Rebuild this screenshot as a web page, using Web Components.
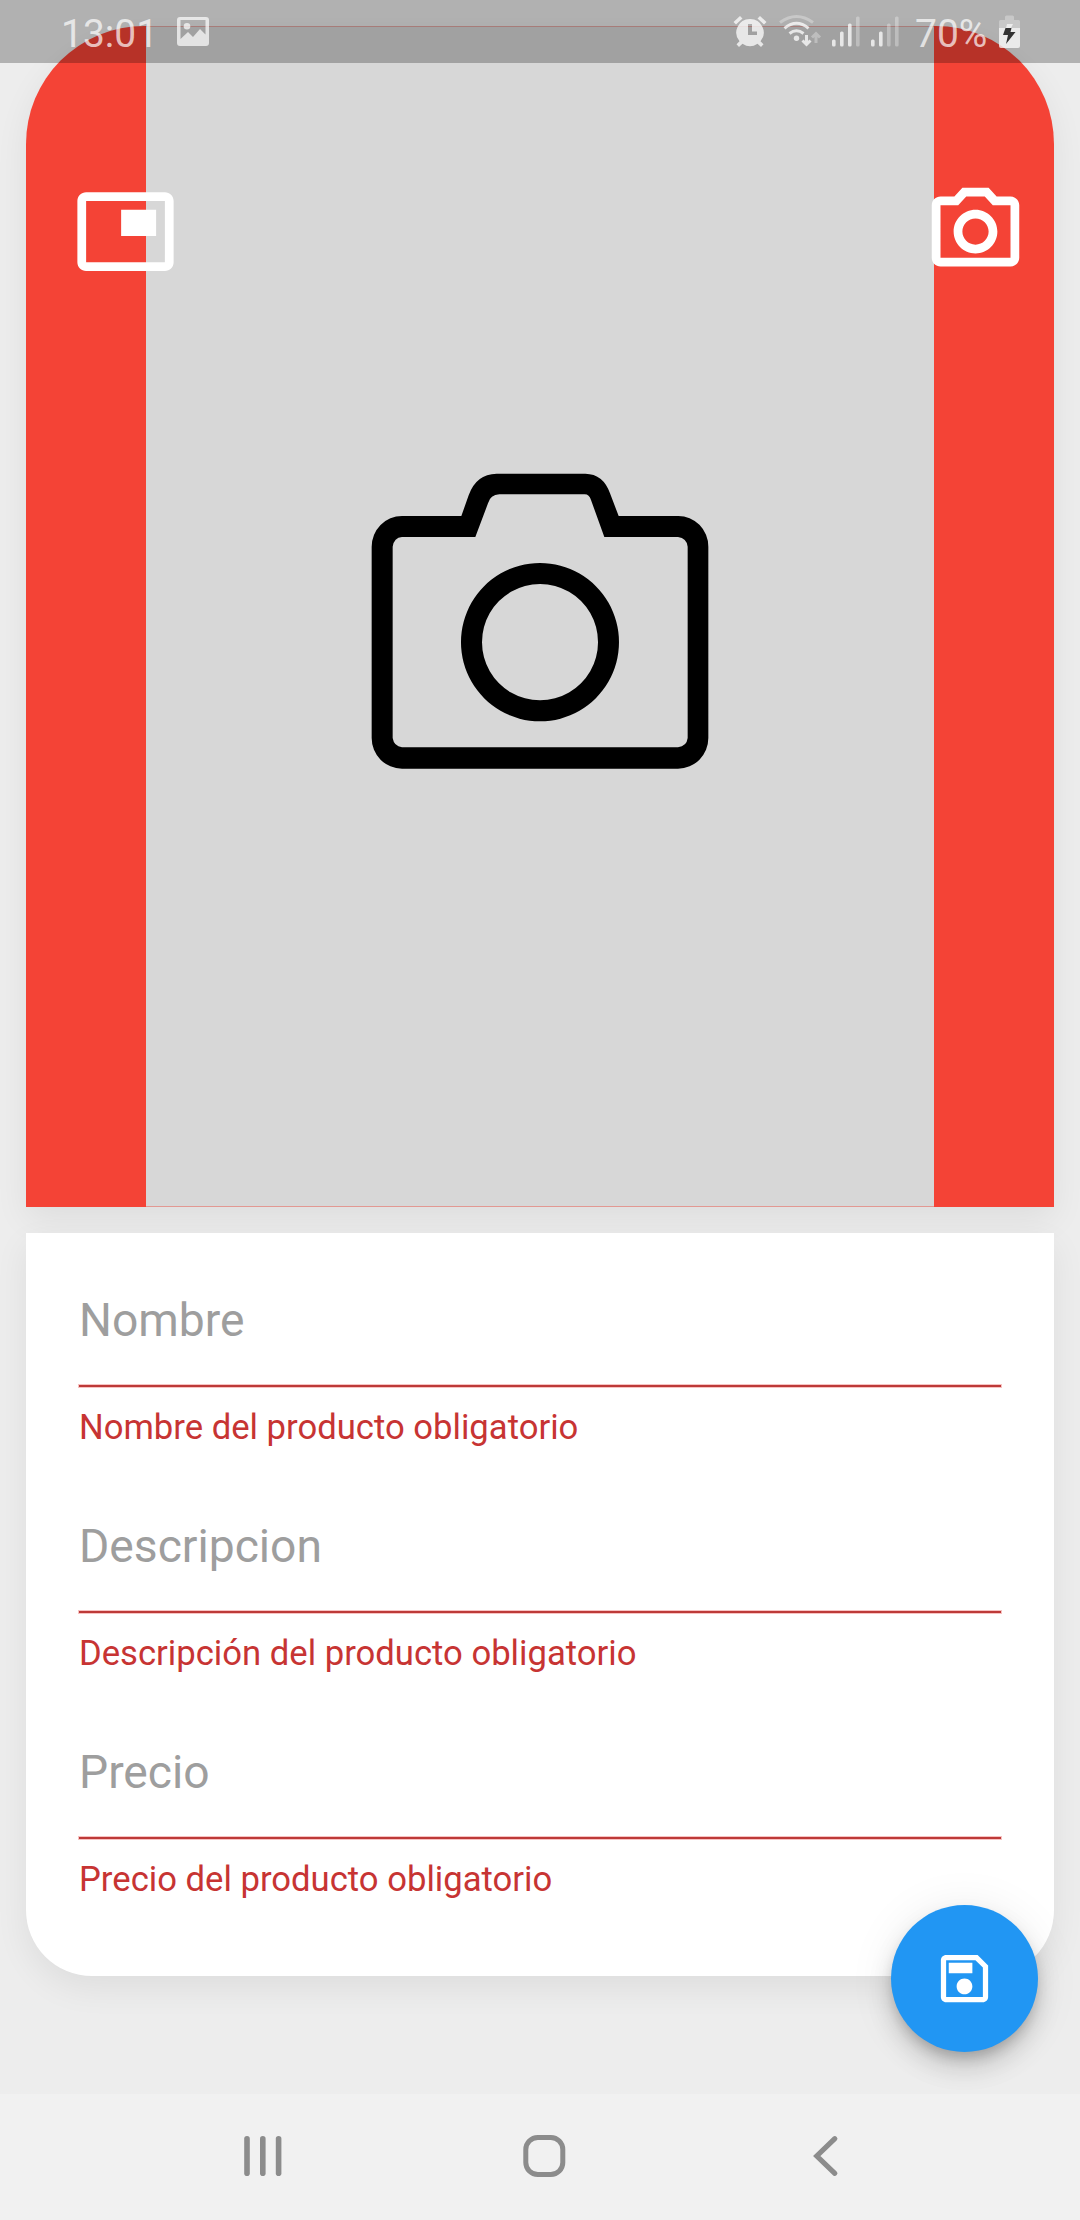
<!DOCTYPE html>
<html lang="es">
<head>
<meta charset="utf-8">
<title>Producto</title>
<style>
html,body{margin:0;padding:0}
body{width:1080px;height:2220px;overflow:hidden;background:#ededed;font-family:Roboto,"Liberation Sans",sans-serif}
</style>
</head>
<body>
<product-screen></product-screen>
<script>
const define = (name, html) => customElements.define(name, class extends HTMLElement {
  constructor() {
    super();
    const t = document.createElement('template');
    t.innerHTML = html;
    this.attachShadow({mode: 'open'}).appendChild(t.content.cloneNode(true));
  }
});

define('status-bar', `
<style>
:host{display:flex;box-sizing:border-box;height:63px;background:rgba(0,0,0,.25);color:rgba(255,255,255,.7);font-size:39px;line-height:63px;padding-left:61px}
.time{width:94px;padding-top:3px;height:60px;white-space:nowrap}
.pct{padding-top:3px;height:60px;width:80px;white-space:nowrap}
svg{display:block;flex:none}
</style>
<span class="time">13:01</span>
<svg width="578" height="63" viewBox="155 0 578 63" fill="#fff">
  <path fill-opacity=".7" fill-rule="evenodd" d="M180 17h26q3 0 3 3v23q0 3-3 3h-26q-3 0-3-3v-23q0-3 3-3zM180.500 20v19l7.500-7 5 5 7-8 5.500 5.500V20z"/>
  <circle cx="187" cy="26.300" r="3.300" fill-opacity=".7"/>
</svg>
<svg width="182" height="63" viewBox="733 0 182 63" fill="#fff" stroke="none">
  <g fill-opacity=".75">
    <path fill-rule="evenodd" d="M750 19a13.500 13.500 0 0 1 10.500 22.200l3 3-2.500 2.800-3.500-3.300a13.500 13.500 0 0 1-15 0l-3.500 3.300-2.500-2.800 3-3A13.500 13.500 0 0 1 750 19zM748 24v11h9v-3.500h-5V24z"/>
    <path d="M733.500 22l6.500-6 2.500 2.500-6.500 6zM766.500 22l-6.500-6-2.500 2.500 6.500 6z"/>
    <circle cx="796.500" cy="38.300" r="2.700"/>
    <rect x="832" y="39.500" width="3.600" height="7" rx="1.500"/><rect x="840" y="31.500" width="3.600" height="15" rx="1.500"/><rect x="848" y="23.500" width="3.600" height="23" rx="1.500"/>
    <rect x="871" y="39.500" width="3.600" height="7" rx="1.500"/><rect x="879" y="31.500" width="3.600" height="15" rx="1.500"/>
  </g>
  <g fill-opacity=".3"><rect x="856" y="16.500" width="3.600" height="30" rx="1.500"/><rect x="887" y="23.500" width="3.600" height="23" rx="1.500"/><rect x="895" y="16.500" width="3.600" height="30" rx="1.500"/></g>
  <g fill="none" stroke="#fff" stroke-width="3">
    <path stroke-opacity=".3" d="M780 22.500q16.500-12 33 0"/>
    <path stroke-opacity=".75" d="M784.500 28.300q12-10 24 0M789.500 33.500q7-5.500 14 0M806.500 35v9M802.500 40.500l4 4 4-4"/>
    <path stroke-opacity=".3" d="M816 43v-9M812 37.500l4-4 4 4"/>
  </g>
</svg>
<span class="pct">70%</span>
<svg width="30" height="63" viewBox="995 0 30 63">
  <path fill="#fff" fill-opacity=".3" d="M1005 20v-3q0-1.500 1.500-1.500h6q1.500 0 1.500 1.500v3h4.500q1.500 0 1.500 1.500V28h-21v-6.500q0-1.500 1.500-1.500z"/>
  <path fill="#fff" fill-opacity=".75" d="M999 28h21v18q0 2-2 2h-17q-2 0-2-2z"/>
  <path fill="#fff" fill-opacity=".65" d="M1007 24h6l-2 4h-5z"/>
  <path fill="#333" d="M1005.500 28h6l-1 4h5l-9.500 12 2-9h-5z"/>
</svg>`);

define('picture-in-picture-icon', `
<style>:host{display:block;width:105px;height:105px}svg{display:block}</style>
<svg width="105" height="105" viewBox="0 0 24 24" fill="#fff"><path d="M19 7h-8v6h8V7zM21 3H3c-1.100 0-2 .9-2 2v14c0 1.100.9 2 2 2h18c1.100 0 2-.9 2-2V5c0-1.100-.9-2-2-2zm0 16H3V5h18v14z"/></svg>`);

define('photo-camera-icon', `
<style>:host{display:block;width:105px;height:105px}svg{display:block}</style>
<svg width="105" height="105" viewBox="0 0 24 24" fill="#fff"><path d="M14.120 4l1.830 2H20v12H4V6h4.050l1.830-2h4.240M15 2H9L7.170 4H4c-1.100 0-2 .9-2 2v12c0 1.100.9 2 2 2h16c1.100 0 2-.9 2-2V6c0-1.100-.9-2-2-2h-3.170L15 2zm-3 7c1.650 0 3 1.350 3 3s-1.350 3-3 3-3-1.350-3-3 1.350-3 3-3m0-2c-2.760 0-5 2.240-5 5s2.240 5 5 5 5-2.240 5-5-2.240-5-5-5z"/></svg>`);

define('image-placeholder', `
<style>
:host{display:flex;box-sizing:border-box;width:788px;height:1181px;background:#d7d7d7;border-top:1px solid #dfa6a2;border-bottom:1px solid #e29892;padding:423px 204px 0;justify-content:center}
svg{display:block;flex:none}
</style>
<svg width="380" height="340" viewBox="0 0 1140 1020"><path fill-rule="evenodd" d="M334 198L356 136Q378 72 440 71H706Q760 72 780 130L806 198H984A90 92 0 0 1 1075 290V864A91 92 0 0 1 984 956H156A91 92 0 0 1 65 864V290A91 92 0 0 1 156 198ZM376 261H156Q132 263 128 290V864Q132 889 156 892H984Q1010 889 1013 864V290Q1010 264 984 261H763L723 150Q718 133 704 133H448Q421 134 414 160ZM570 339A237 237.500 0 1 1 569.900 339ZM570 402A174 174.500 0 1 0 570.100 402Z"/></svg>`);

define('photo-card', `
<style>
:host{display:grid;height:1181px;background:#f44336;border-radius:118px 118px 0 0;overflow:hidden}
:host>*{grid-area:1/1}
image-placeholder{justify-self:center}
.actions{display:flex;justify-content:space-between;align-items:flex-start;padding:153px 26.500px 0 47.300px;z-index:1}
</style>
<image-placeholder></image-placeholder>
<div class="actions"><picture-in-picture-icon></picture-in-picture-icon><photo-camera-icon></photo-camera-icon></div>`);

define('form-field', `
<style>
:host{display:block;height:225.750px}
.label{height:93px;line-height:56px;font-size:46.200px;color:#9e9e9e}
.rule{height:2px;background:#bd3a38;box-shadow:0 0 0 1px rgba(229,57,53,.3)}
.error{margin-top:20px;line-height:40px;font-size:34.650px;color:#c73433}
</style>
<div class="label"><slot name="label"></slot></div>
<div class="rule"></div>
<div class="error"><slot name="error"></slot></div>`);

define('product-form', `
<style>
:host{display:flex;flex-direction:column;box-sizing:border-box;height:743px;background:#fff;border-radius:0 0 66px 66px;padding:59px 53px 0}
</style>
<form-field><span slot="label">Nombre</span><span slot="error">Nombre del producto obligatorio</span></form-field>
<form-field><span slot="label">Descripcion</span><span slot="error">Descripción del producto obligatorio</span></form-field>
<form-field><span slot="label">Precio</span><span slot="error">Precio del producto obligatorio</span></form-field>`);

define('save-button', `
<style>
:host{display:flex;align-items:center;justify-content:center;width:147px;height:147px;border-radius:50%;background:#2196f3;box-shadow:0 8px 13px -3px rgba(0,0,0,.2),0 16px 26px rgba(0,0,0,.14),0 3px 47px rgba(0,0,0,.08)}
svg{display:block}
</style>
<svg width="63" height="63" viewBox="0 0 24 24" fill="#fff"><path d="M17 3H5c-1.110 0-2 .9-2 2v14c0 1.100.89 2 2 2h14c1.100 0 2-.9 2-2V7l-4-4zm2 16H5V5h11.170L19 7.830V19zm-7-7c-1.660 0-3 1.340-3 3s1.340 3 3 3 3-1.340 3-3-1.340-3-3-3zM6 6h9v4H6z"/></svg>`);

define('navigation-bar', `
<style>
:host{display:flex;align-items:center;justify-content:space-between;box-sizing:border-box;height:126px;background:#f1f1f1;padding:0 240px 2px 242px}
svg{display:block}
.home{margin-left:-9px}
</style>
<svg width="42" height="44" viewBox="0 0 42 44" fill="#8c8c8c"><rect x="2.200" y="2" width="5.600" height="40" rx="2.800"/><rect x="18" y="2" width="5.600" height="40" rx="2.800"/><rect x="33.800" y="2" width="5.600" height="40" rx="2.800"/></svg>
<svg class="home" width="44" height="44" viewBox="0 0 44 44"><rect x="3.800" y="3.500" width="37" height="37" rx="12" fill="none" stroke="#8c8c8c" stroke-width="5"/></svg>
<svg width="28" height="44" viewBox="0 0 28 44"><path d="M22.800 4.700L4.800 22l18 17.300" fill="none" stroke="#8c8c8c" stroke-width="5.200" stroke-linecap="round"/></svg>`);

define('product-screen', `
<style>
:host{display:flex;flex-direction:column;position:relative;width:1080px;height:2220px;background:#ededed}
main{flex:1;display:flex;flex-direction:column;gap:26px;padding:26px 26px 0}
photo-card,product-form{box-shadow:0 12px 34px rgba(0,0,0,.065)}
status-bar{position:absolute;top:0;left:0;right:0;z-index:2}
save-button{position:absolute;right:42px;bottom:168px;z-index:2}
</style>
<status-bar></status-bar>
<main><photo-card></photo-card><product-form></product-form></main>
<save-button></save-button>
<navigation-bar></navigation-bar>`);
</script>
</body>
</html>
